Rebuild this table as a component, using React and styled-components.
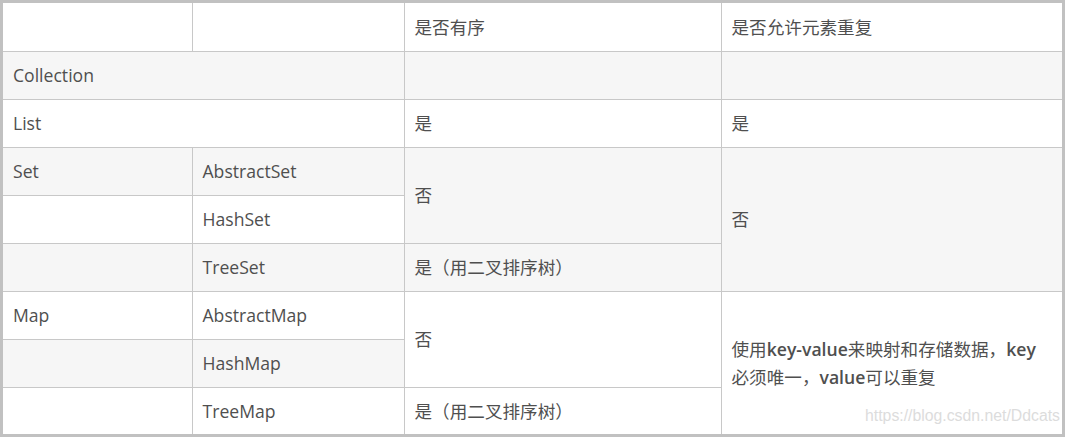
import React from "react";
import styled, { createGlobalStyle } from "styled-components";

const Global = createGlobalStyle`
  html, body { margin: 0; padding: 0; background: #ffffff; }
  body { font-family: "Open Sans", "Noto Sans CJK SC", sans-serif; }
`;

const Frame = styled.div`
  position: relative;
  width: 1059px;
  height: 431px;
  border: 3px solid #c1c1c1;
  overflow: hidden;
`;

const Table = styled.table`
  width: 1059px;
  table-layout: fixed;
  border-collapse: collapse;
  border-style: hidden;
  font-family: "Open Sans", "Noto Sans CJK SC", sans-serif;
  font-size: 17.6px;
  color: #4f4f4f;
`;

const Row = styled.tr`
  height: 48px;
  background: ${(p) => (p.$striped ? "#f6f6f6" : "#ffffff")};
`;

const Cell = styled.td`
  border: 1px solid #c8c8c8;
  padding: 0 10px;
  line-height: 28px;
  vertical-align: middle;
  text-align: left;
  white-space: ${(p) => (p.$wrap ? "normal" : "nowrap")};
`;

const Note = styled.span`
  font-family: "Noto Sans CJK SC", sans-serif;
`;

const Latin = styled.span`
  font-family: "Open Sans", sans-serif;
  font-weight: 600;
`;

const Watermark = styled.div`
  position: absolute;
  right: 2px;
  bottom: 9px;
  font-family: "Liberation Sans", Arial, sans-serif;
  font-size: 15.8px;
  color: #dcdcdc;
  text-shadow: 0 0 1px #ffffff;
  pointer-events: none;
`;

export default function App() {
  return (
    <>
      <Global />
      <Frame>
        <Table>
          <colgroup>
            <col style={{ width: 189 }} />
            <col style={{ width: 212 }} />
            <col style={{ width: 317 }} />
            <col style={{ width: 341 }} />
          </colgroup>
          <tbody>
            <Row>
              <Cell></Cell>
              <Cell></Cell>
              <Cell>是否有序</Cell>
              <Cell>是否允许元素重复</Cell>
            </Row>
            <Row $striped>
              <Cell colSpan={2}>Collection</Cell>
              <Cell></Cell>
              <Cell></Cell>
            </Row>
            <Row>
              <Cell colSpan={2}>List</Cell>
              <Cell>是</Cell>
              <Cell>是</Cell>
            </Row>
            <Row $striped>
              <Cell>Set</Cell>
              <Cell>AbstractSet</Cell>
              <Cell rowSpan={2}>否</Cell>
              <Cell rowSpan={3}>否</Cell>
            </Row>
            <Row>
              <Cell></Cell>
              <Cell>HashSet</Cell>
            </Row>
            <Row $striped>
              <Cell></Cell>
              <Cell>TreeSet</Cell>
              <Cell>是（用二叉排序树）</Cell>
            </Row>
            <Row>
              <Cell>Map</Cell>
              <Cell>AbstractMap</Cell>
              <Cell rowSpan={2}>否</Cell>
              <Cell rowSpan={3} $wrap>
                <Note>
                  使用<Latin>key-value</Latin>来映射和存储数据，<Latin>key</Latin>必须唯一，<Latin>value</Latin>可以重复
                </Note>
              </Cell>
            </Row>
            <Row $striped>
              <Cell></Cell>
              <Cell>HashMap</Cell>
            </Row>
            <Row>
              <Cell></Cell>
              <Cell>TreeMap</Cell>
              <Cell>是（用二叉排序树）</Cell>
            </Row>
          </tbody>
        </Table>
        <Watermark>https://blog.csdn.net/Ddcats</Watermark>
      </Frame>
    </>
  );
}
